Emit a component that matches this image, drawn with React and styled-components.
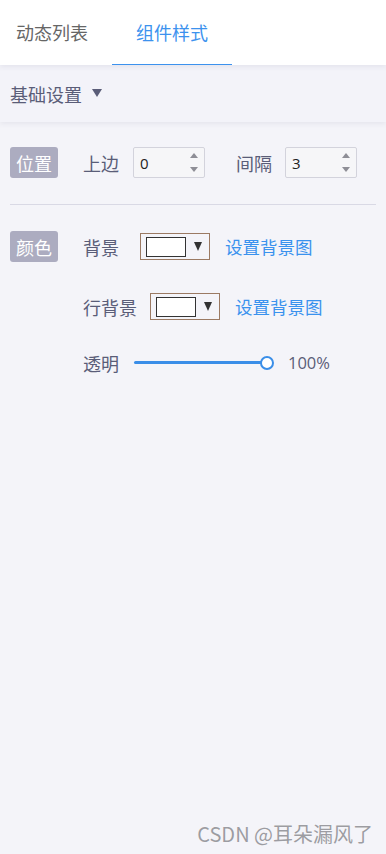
import React, { useState } from "react"
import styled, { createGlobalStyle } from "styled-components"

const GlobalStyle = createGlobalStyle`
  html, body {
    margin: 0;
    padding: 0;
    background: #f4f4f9;
  }
  body {
    font-family: "Noto Sans CJK SC", "Noto Sans", sans-serif;
  }
  * { box-sizing: border-box; }
`

const Page = styled.div`
  position: relative;
  min-height: 854px;
  background: #f4f4f9;
`

const Header = styled.div`
  display: flex;
  height: 65px;
  background: #fff;
  position: relative;
  z-index: 2;
  box-shadow: 0 2px 5px rgba(60, 60, 100, 0.08);
`

const Tab = styled.div`
  display: flex;
  align-items: center;
  height: 100%;
  padding: 0 24px 0 ${p => (p.$first ? "16px" : "24px")};
  font-size: 18px;
  color: ${p => (p.$active ? "#3c92ee" : "#666")};
  border-bottom: 1px solid ${p => (p.$active ? "#3c92ee" : "transparent")};
`

const SectionHead = styled.div`
  display: flex;
  align-items: center;
  gap: 10px;
  height: 57px;
  padding: 0 10px;
  font-size: 18px;
  color: #5a5d78;
  background: #f3f3f9;
  position: relative;
  z-index: 1;
  box-shadow: 0 2px 5px rgba(60, 60, 100, 0.08);
`

const Caret = styled.span`
  width: 0;
  height: 0;
  border-left: 5px solid transparent;
  border-right: 5px solid transparent;
  border-top: 8px solid #5a5d78;
  margin-top: -2px;
`

const Body = styled.div`
  padding: 25px 10px 0;
`

const Group = styled.div`
  display: flex;
  gap: 25px;
  padding-bottom: ${p => p.$pad || "0px"};
  border-bottom: ${p => (p.$line ? "1px solid #d9d9e5" : "none")};
  margin-bottom: ${p => p.$mb || "0px"};
`

const Badge = styled.div`
  flex: none;
  width: 48px;
  height: 31px;
  display: flex;
  align-items: center;
  justify-content: center;
  background: #acacc0;
  color: #fff;
  font-size: 18px;
  border-radius: 3px;
`

const Rows = styled.div`
  display: flex;
  flex-direction: column;
`

const Row = styled.div`
  display: flex;
  align-items: center;
  height: 31px;
  margin-top: ${p => p.$mt || "0px"};
`

const Label = styled.span`
  font-size: 18px;
  color: #5a5d78;
  margin-right: ${p => p.$mr || "15px"};
  line-height: 1;
`

const NumberBox = styled.div`
  position: relative;
  width: 72px;
  height: 31px;
  border: 1px solid #d3d3dc;
  border-radius: 2px;
  background: #f6f6f8;
  display: flex;
  align-items: center;
  padding-left: 6px;
  font-family: "Open Sans", "Noto Sans", sans-serif;
  font-size: 15px;
  color: #222;
  margin-right: ${p => p.$mr || "0px"};
`

const Spinner = styled.div`
  position: absolute;
  right: 6px;
  top: 5px;
  bottom: 5px;
  display: flex;
  flex-direction: column;
  justify-content: space-between;
`

const Arrow = styled.span`
  width: 0;
  height: 0;
  border-left: 4px solid transparent;
  border-right: 4px solid transparent;
  ${p => (p.$up ? "border-bottom: 5px solid #8e8e96;" : "border-top: 5px solid #8e8e96;")}
`

const ColorPicker = styled.div`
  display: flex;
  align-items: center;
  width: 70px;
  height: 27px;
  border: 1px solid #9b7a63;
  padding-left: 5px;
  gap: 8px;
  margin-right: 15px;
  background: #f4f4f9;
`

const Swatch = styled.span`
  width: 40px;
  height: 20px;
  background: #fff;
  border: 1px solid #333;
`

const PickerCaret = styled.span`
  width: 0;
  height: 0;
  border-left: 4px solid transparent;
  border-right: 4px solid transparent;
  border-top: 9px solid #333;
`

const Link = styled.a`
  font-size: 17.5px;
  color: #3a92ee;
  text-decoration: none;
  cursor: pointer;
`

const Slider = styled.div`
  position: relative;
  width: 139px;
  height: 14px;
  margin-right: 15px;
  display: flex;
  align-items: center;
`

const Track = styled.div`
  height: 3px;
  width: 100%;
  background: #3a8ee8;
  border-radius: 2px;
`

const Thumb = styled.span`
  position: absolute;
  top: 0;
  width: 14px;
  height: 14px;
  border-radius: 50%;
  border: 2px solid #3a8ee8;
  background: #fff;
  transform: translateX(-50%);
`

const Value = styled.span`
  font-family: "Open Sans", "Noto Sans", sans-serif;
  font-size: 16.5px;
  color: #5a5d78;
`

const Watermark = styled.div`
  position: absolute;
  right: 13px;
  bottom: 6px;
  font-family: "Noto Sans CJK SC", sans-serif;
  font-size: 20px;
  color: #9c9ca2;
  text-shadow: 0 0 1px #fff;
`

const tabs = ["动态列表", "组件样式"]

export default function App() {
  const [active] = useState(1)
  const opacity = 100

  return (
    <Page>
      <GlobalStyle />
      <Header>
        {tabs.map((t, i) => (
          <Tab key={t} $first={i === 0} $active={i === active}>
            {t}
          </Tab>
        ))}
      </Header>
      <SectionHead>
        基础设置
        <Caret />
      </SectionHead>
      <Body>
        <Group $line $pad="26px" $mb="26px">
          <Badge>位置</Badge>
          <Rows>
            <Row>
              <Label $mr="14px">上边</Label>
              <NumberBox $mr="31px">
                0
                <Spinner>
                  <Arrow $up />
                  <Arrow />
                </Spinner>
              </NumberBox>
              <Label $mr="13px">间隔</Label>
              <NumberBox>
                3
                <Spinner>
                  <Arrow $up />
                  <Arrow />
                </Spinner>
              </NumberBox>
            </Row>
          </Rows>
        </Group>
        <Group>
          <Badge>颜色</Badge>
          <Rows>
            <Row>
              <Label $mr="21px">背景</Label>
              <ColorPicker>
                <Swatch />
                <PickerCaret />
              </ColorPicker>
              <Link>设置背景图</Link>
            </Row>
            <Row $mt="29px">
              <Label $mr="13px">行背景</Label>
              <ColorPicker>
                <Swatch />
                <PickerCaret />
              </ColorPicker>
              <Link>设置背景图</Link>
            </Row>
            <Row $mt="25px">
              <Label $mr="15px">透明</Label>
              <Slider>
                <Track />
                <Thumb style={{ left: `${(opacity / 100) * 133}px` }} />
              </Slider>
              <Value>{opacity}%</Value>
            </Row>
          </Rows>
        </Group>
      </Body>
      <Watermark>CSDN @耳朵漏风了</Watermark>
    </Page>
  )
}
